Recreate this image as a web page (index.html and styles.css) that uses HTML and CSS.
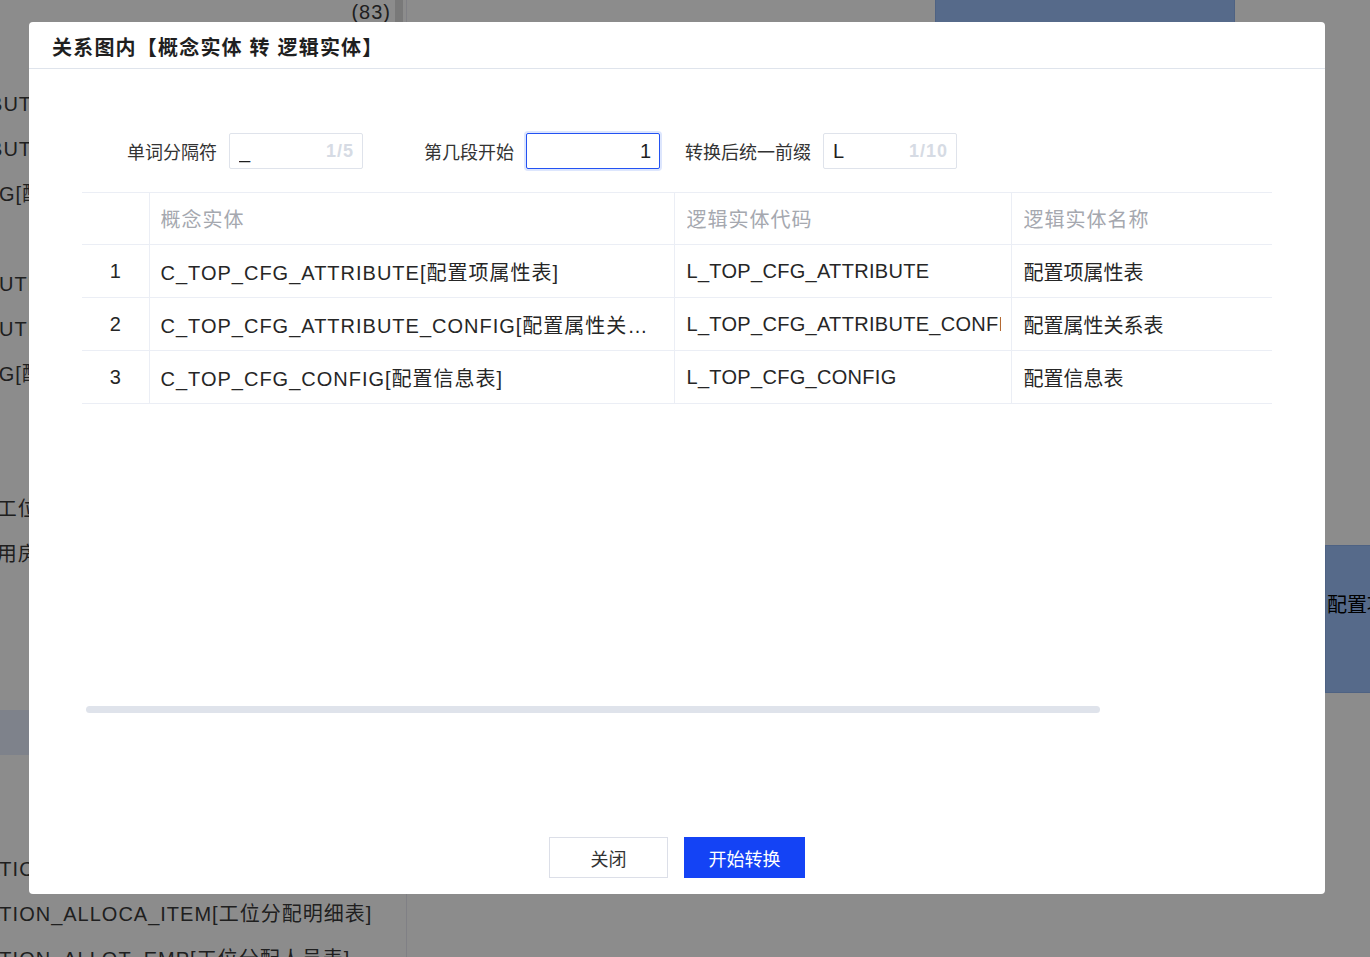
FILE: index.html
```html
<!DOCTYPE html>
<html lang="zh-CN">
<head>
<meta charset="utf-8">
<title>关系图内【概念实体 转 逻辑实体】</title>
<link rel="stylesheet" href="styles.css">
</head>
<body>
<div class="page">
  <aside class="tree">
    <div class="tree-list">
      <div class="tree-row tree-group"><span class="tree-count">(83)</span></div>
      <div class="tree-row"><span class="lv-hidden">概念实体</span></div>
      <div class="tree-row"><span class="lv-a">C_TOP_CFG_ATTRIBUTE[配置项属性表]</span></div>
      <div class="tree-row"><span class="lv-a">C_TOP_CFG_ATTRIBUTE_CONFIG[配置属性关系表]</span></div>
      <div class="tree-row"><span class="lv-b">C_TOP_CFG_CONFIG[配置信息表]</span></div>
      <div class="tree-row"><span class="lv-hidden">逻辑实体</span></div>
      <div class="tree-row"><span class="lv-c">L_TOP_CFG_ATTRIBUTE[配置项属性表]</span></div>
      <div class="tree-row"><span class="lv-c">L_TOP_CFG_ATTRIBUTE_CONFIG[配置属性关系表]</span></div>
      <div class="tree-row"><span class="lv-d">L_TOP_CFG_CONFIG[配置信息表]</span></div>
      <div class="tree-row"><span class="lv-hidden">工位管理</span></div>
      <div class="tree-row"><span class="lv-hidden">工位</span></div>
      <div class="tree-row"><span class="lv-e">C_TOP_STATION[工位信息表]</span></div>
      <div class="tree-row"><span class="lv-f">C_TOP_OFFICE_ROOM[办公用房表]</span></div>
      <div class="tree-row"></div>
      <div class="tree-row"></div>
      <div class="tree-row"></div>
      <div class="tree-row tree-selected"></div>
      <div class="tree-row"></div>
      <div class="tree-row"></div>
      <div class="tree-row"><span class="lv-g">C_TOP_STATION[工位表]</span></div>
      <div class="tree-row"><span class="lv-g">C_TOP_STATION_ALLOCA_ITEM[工位分配明细表]</span></div>
      <div class="tree-row"><span class="lv-g">C_TOP_STATION_ALLOT_EMP[工位分配人员表]</span></div>
    </div>
    <div class="tree-scroll"><div class="tree-thumb"></div></div>
  </aside>
  <main class="canvas">
    <div class="node node-a"></div>
    <div class="node node-b">配置项属性表</div>
  </main>
</div>

<div class="mask"></div>

<div class="dialog">
  <div class="dialog-header">
    <span class="dialog-title">关系图内【概念实体 转 逻辑实体】</span>
  </div>
  <div class="dialog-body">
    <div class="form-row">
      <div class="form-item">
        <label class="form-label">单词分隔符</label>
        <div class="field">
          <input class="field-input" value="_">
          <span class="field-count">1/5</span>
        </div>
      </div>
      <div class="form-item">
        <label class="form-label">第几段开始</label>
        <div class="field field-focus">
          <input class="field-input field-right" value="1">
        </div>
      </div>
      <div class="form-item">
        <label class="form-label">转换后统一前缀</label>
        <div class="field">
          <input class="field-input" value="L">
          <span class="field-count">1/10</span>
        </div>
      </div>
    </div>

    <div class="grid-wrap">
      <table class="grid">
        <colgroup>
          <col class="c-idx">
          <col class="c-concept">
          <col class="c-code">
          <col class="c-name">
        </colgroup>
        <thead>
          <tr>
            <th><div class="cell"></div></th>
            <th><div class="cell">概念实体</div></th>
            <th><div class="cell cell-code">逻辑实体代码</div></th>
            <th><div class="cell cell-name">逻辑实体名称</div></th>
          </tr>
        </thead>
        <tbody>
          <tr>
            <td><div class="cell cell-idx">1</div></td>
            <td><div class="cell cell-concept">C_TOP_CFG_ATTRIBUTE[配置项属性表]</div></td>
            <td><div class="cell cell-code">L_TOP_CFG_ATTRIBUTE</div></td>
            <td><div class="cell cell-name">配置项属性表</div></td>
          </tr>
          <tr>
            <td><div class="cell cell-idx">2</div></td>
            <td><div class="cell cell-concept">C_TOP_CFG_ATTRIBUTE_CONFIG[配置属性关系表]</div></td>
            <td><div class="cell cell-code">L_TOP_CFG_ATTRIBUTE_CONFIG</div></td>
            <td><div class="cell cell-name">配置属性关系表</div></td>
          </tr>
          <tr>
            <td><div class="cell cell-idx">3</div></td>
            <td><div class="cell cell-concept">C_TOP_CFG_CONFIG[配置信息表]</div></td>
            <td><div class="cell cell-code">L_TOP_CFG_CONFIG</div></td>
            <td><div class="cell cell-name">配置信息表</div></td>
          </tr>
        </tbody>
      </table>
      <div class="hbar"></div>
    </div>
  </div>
  <div class="dialog-footer">
    <button class="btn btn-default">关闭</button>
    <button class="btn btn-primary">开始转换</button>
  </div>
</div>
</body>
</html>
```

FILE: styles.css
```css
* { box-sizing: border-box; }

html, body {
  margin: 0;
  height: 100%;
}

body {
  font-family: "Liberation Sans", "Noto Sans CJK SC", sans-serif;
  background: #ffffff;
  color: #333333;
  overflow: hidden;
}

/* ---------- background page ---------- */
.page {
  display: flex;
  height: 957px;
}

.tree {
  width: 407px;
  flex: none;
  display: flex;
  border-right: 1px solid #e9e9f2;
  overflow: hidden;
}

.tree-list {
  width: 395px;
  flex: none;
  margin-top: -10px;
  overflow: hidden;
}

.tree-row {
  height: 45px;
  display: flex;
  align-items: center;
  white-space: nowrap;
  font-size: 20px;
  letter-spacing: 1px;
  color: #3a3a3a;
  overflow: hidden;
}

.tree-group {
  justify-content: flex-end;
  padding-right: 4px;
}

.tree-selected {
  background: #e6edfd;
}

.lv-hidden { margin-left: 60px; }
.lv-a { margin-left: -213px; }
.lv-b { margin-left: -209px; }
.lv-c { margin-left: -214px; }
.lv-d { margin-left: -206px; }
.lv-e { margin-left: -184px; }
.lv-f { margin-left: -293px; }
.lv-g { margin-left: -123px; }

.tree-scroll {
  width: 8px;
  flex: none;
}

.tree-thumb {
  height: 260px;
  background: #dcdcdc;
}

.canvas {
  flex: 1;
  position: relative;
  overflow: hidden;
}

.node {
  position: absolute;
  background: #9dc2fc;
  border: 1px solid #8eb2ee;
}

.node-a {
  left: 528px;
  top: -120px;
  width: 300px;
  height: 160px;
}

.node-b {
  left: 918px;
  top: 545px;
  width: 300px;
  height: 148px;
  padding: 46px 0 0 1px;
  font-size: 20px;
  line-height: 27px;
  color: #000000;
  white-space: nowrap;
}

/* ---------- modal ---------- */
.mask {
  position: fixed;
  inset: 0;
  background: rgba(0, 0, 0, 0.45);
}

.dialog {
  position: fixed;
  left: 29px;
  top: 22px;
  width: 1296px;
  height: 872px;
  background: #ffffff;
  border-radius: 4px;
  display: flex;
  flex-direction: column;
}

.dialog-header {
  height: 47px;
  flex: none;
  display: flex;
  align-items: center;
  padding: 2px 0 0 23px;
  border-bottom: 1px solid #dfe4ec;
}

.dialog-title {
  font-size: 20px;
  font-weight: 700;
  letter-spacing: 1.2px;
  color: #1f1f1f;
}

.dialog-body {
  flex: 1;
  display: flex;
  flex-direction: column;
  padding: 0 53px;
}

/* form */
.form-row {
  display: flex;
  height: 36px;
  margin: 64px 0 0 -16px;
}

.form-item {
  display: flex;
  align-items: center;
}

.form-label {
  width: 163px;
  padding-right: 12px;
  text-align: right;
  font-size: 18px;
  color: #333333;
}

.field {
  width: 134px;
  height: 36px;
  display: flex;
  align-items: center;
  padding: 0 8px 0 9px;
  border: 1px solid #dfe3eb;
  border-radius: 2px;
  background: #ffffff;
}

.field-focus {
  border-color: #2352f2;
  box-shadow: 0 0 0 2px #dde6fd;
}

.field-input {
  flex: 1;
  min-width: 0;
  border: 0;
  outline: 0;
  padding: 0;
  background: transparent;
  font-family: "Liberation Sans", "Noto Sans CJK SC", sans-serif;
  font-size: 20px;
  color: #1f1f1f;
}

.field-right {
  text-align: right;
}

.field-count {
  margin-left: 4px;
  font-size: 18px;
  font-weight: 700;
  letter-spacing: 1px;
  color: #d6dbe4;
}

/* table */
.grid-wrap {
  margin-top: 23px;
  height: 521px;
  display: flex;
  flex-direction: column;
}

.grid {
  width: 1190px;
  table-layout: fixed;
  border-collapse: collapse;
}

.c-idx { width: 67px; }
.c-concept { width: 525px; }
.c-code { width: 337px; }
.c-name { width: 261px; }

.grid th,
.grid td {
  padding: 0;
  border-bottom: 1px solid #ebeef5;
  border-right: 1px solid #ebeef5;
  text-align: left;
}

.grid th:last-child,
.grid td:last-child {
  border-right: 0;
}

.grid th {
  height: 52px;
  border-top: 1px solid #ebeef5;
  font-size: 20px;
  font-weight: 400;
  letter-spacing: 1px;
  color: #a5a8af;
}

.grid td {
  height: 53px;
  font-size: 20px;
  color: #262626;
}

.cell {
  margin: 0 11px;
  overflow: hidden;
  white-space: nowrap;
}

.cell-idx {
  margin: 0;
  text-align: center;
}

.cell-concept {
  letter-spacing: 1px;
  text-overflow: ellipsis;
}

.cell-code {
  margin: 0 10px 0 12px;
}

.grid td .cell-code {
  letter-spacing: 0.3px;
}

.cell-name {
  margin: 0 10px 0 12px;
}

.hbar {
  margin-top: auto;
  margin-left: 4px;
  width: 1014px;
  height: 7px;
  border-radius: 4px;
  background: #dfe3eb;
}

/* footer */
.dialog-footer {
  flex: none;
  display: flex;
  justify-content: center;
  gap: 16px;
  padding-bottom: 16px;
}

.btn {
  height: 41px;
  font-family: "Liberation Sans", "Noto Sans CJK SC", sans-serif;
  font-size: 18px;
  border-radius: 0;
  cursor: pointer;
}

.btn-default {
  width: 119px;
  background: #ffffff;
  border: 1px solid #dcdfe8;
  color: #333333;
}

.btn-primary {
  width: 121px;
  background: #1443f5;
  border: 1px solid #1443f5;
  color: #ffffff;
}
```
